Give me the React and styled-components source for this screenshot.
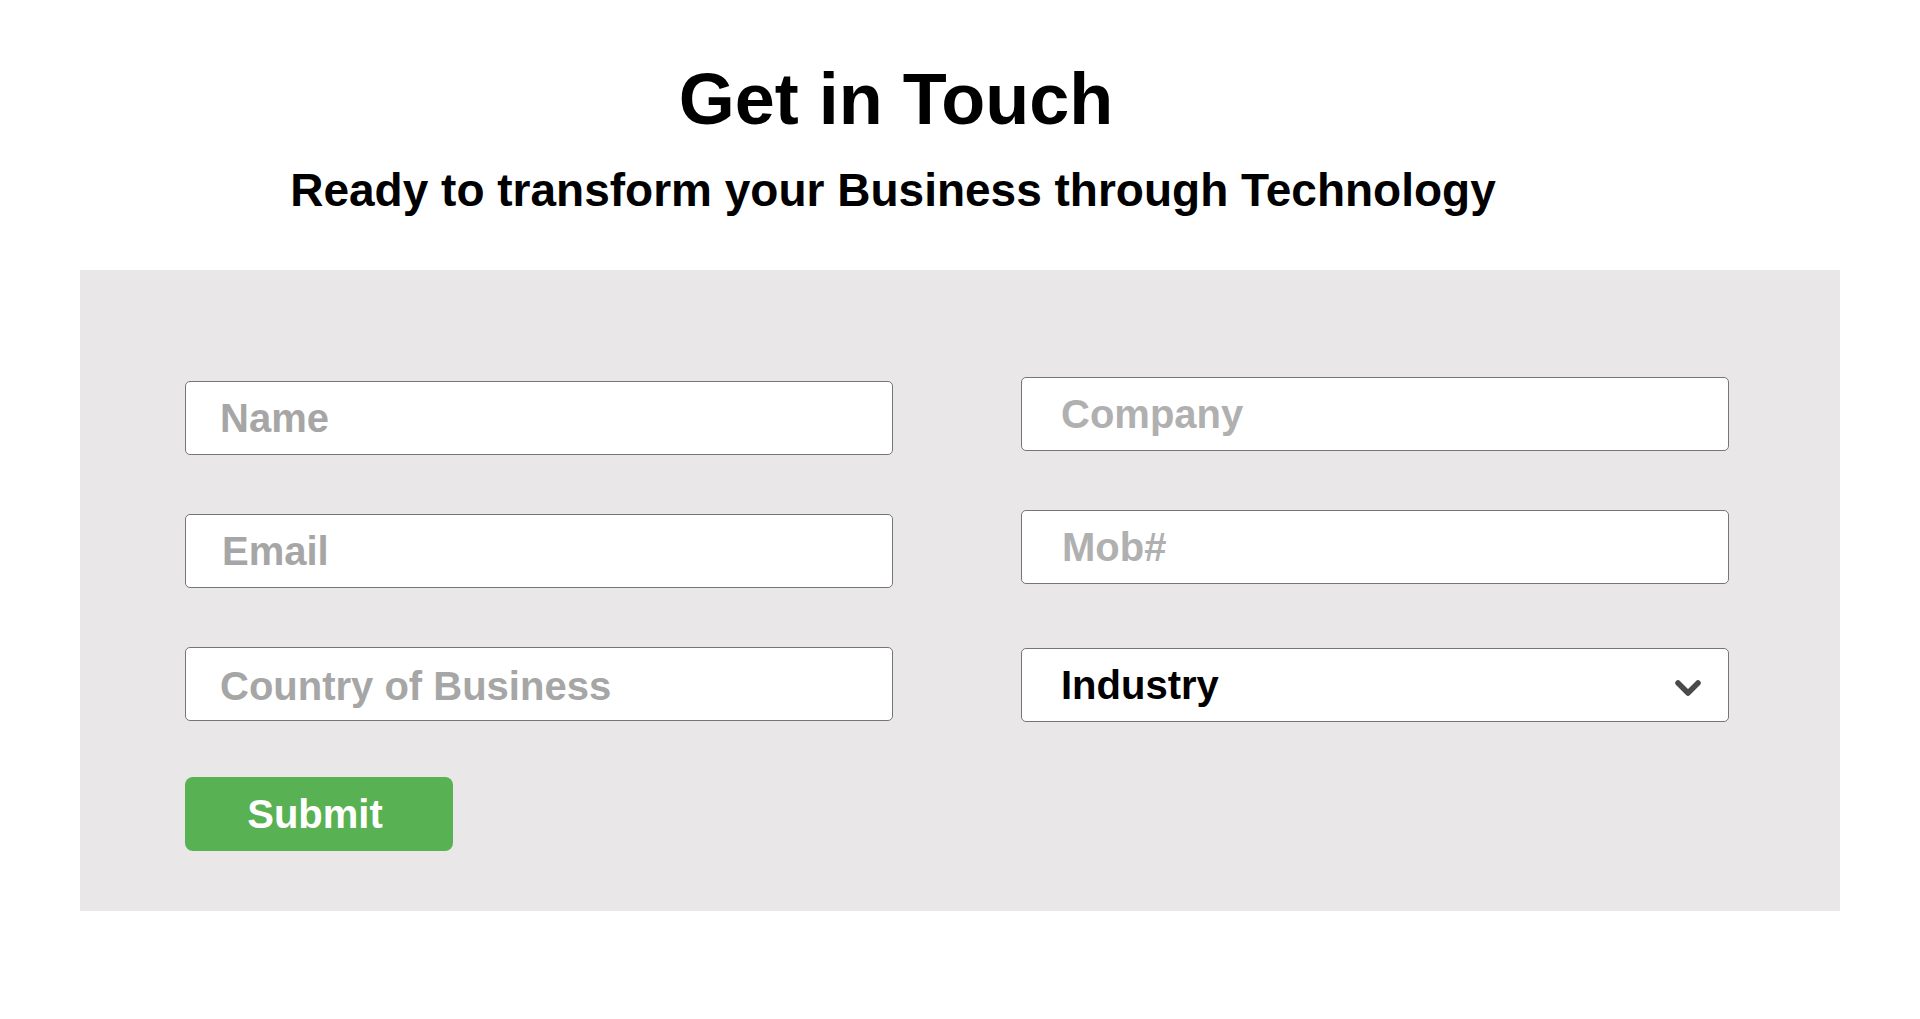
import React from 'react'
import styled, { createGlobalStyle } from 'styled-components'

const GlobalStyle = createGlobalStyle`
  body {
    margin: 0;
    background: #ffffff;
    font-family: "Liberation Sans", Arial, sans-serif;
  }
`

const Page = styled.div`
  width: 1920px;
  min-height: 1019px;
`

const Header = styled.header`
  display: flex;
  flex-direction: column;
  align-items: center;
  padding-right: 128px;
  padding-top: 58px;
`

const Title = styled.h1`
  margin: 0;
  font-size: 72px;
  line-height: 82px;
  font-weight: bold;
  color: #000;
`

const Subtitle = styled.h2`
  margin: 24px 0 0 -6px;
  font-size: 46px;
  line-height: 52px;
  font-weight: bold;
  color: #000;
`

const Panel = styled.form`
  margin: 54px 80px 0;
  background: #e9e7e8;
  padding: 107px 112px 60px 105px;
  display: grid;
  grid-template-columns: 708px 708px;
  column-gap: 128px;
  row-gap: 55px;
  align-items: start;
`

const Field = styled.input`
  box-sizing: border-box;
  width: 100%;
  height: 74px;
  margin-top: ${p => p.$nudge || 0}px;
  padding: ${p => p.$drop || 0}px 0 0 ${p => p.$pad}px;
  border: 1px solid #767676;
  border-radius: 5px;
  background: #fff;
  font-family: "Liberation Sans", Arial, sans-serif;
  font-size: 40px;
  font-weight: bold;
  color: #000;
  outline: none;

  &::placeholder {
    color: ${p => p.$muted};
  }
`

const SelectWrap = styled.div`
  position: relative;
  margin-top: 5px;
`

const Select = styled.select`
  box-sizing: border-box;
  width: 100%;
  height: 74px;
  padding: 0 0 0 39px;
  border: 1px solid #767676;
  border-radius: 5px;
  background: #fff;
  appearance: none;
  font-family: "Liberation Sans", Arial, sans-serif;
  font-size: 40px;
  font-weight: bold;
  color: #000;
  outline: none;
`

const Chevron = styled.svg`
  position: absolute;
  right: 27px;
  top: 31px;
  pointer-events: none;
`

const SubmitButton = styled.button`
  width: 268px;
  height: 74px;
  border: none;
  border-radius: 8px;
  background: #58b152;
  color: #fff;
  font-family: "Liberation Sans", Arial, sans-serif;
  font-size: 40px;
  font-weight: bold;
  cursor: pointer;
  padding: 0 8px 0 0;
`

export default function App() {
  return (
    <Page>
      <GlobalStyle />
      <Header>
        <Title>Get in Touch</Title>
        <Subtitle>Ready to transform your Business through Technology</Subtitle>
      </Header>
      <Panel onSubmit={e => e.preventDefault()}>
        <Field placeholder="Name" $nudge={4} $pad={34} $muted="#a6a6a6" />
        <Field placeholder="Company" $pad={39} $muted="#b0b0b0" />
        <Field placeholder="Email" $nudge={4} $pad={36} $muted="#a6a6a6" />
        <Field placeholder="Mob#" $pad={40} $muted="#b0b0b0" />
        <Field placeholder="Country of Business" $nudge={4} $drop={5} $pad={34} $muted="#a6a6a6" />
        <SelectWrap>
          <Select defaultValue="">
            <option value="">Industry</option>
            <option>Finance</option>
            <option>Healthcare</option>
            <option>Retail</option>
          </Select>
          <Chevron width="28" height="18" viewBox="0 0 28 18">
            <polyline points="4,4 14,14 24,4" fill="none" stroke="#4a4a4a" strokeWidth="5.5" strokeLinecap="round" strokeLinejoin="round" />
          </Chevron>
        </SelectWrap>
        <SubmitButton type="submit">Submit</SubmitButton>
      </Panel>
    </Page>
  )
}
